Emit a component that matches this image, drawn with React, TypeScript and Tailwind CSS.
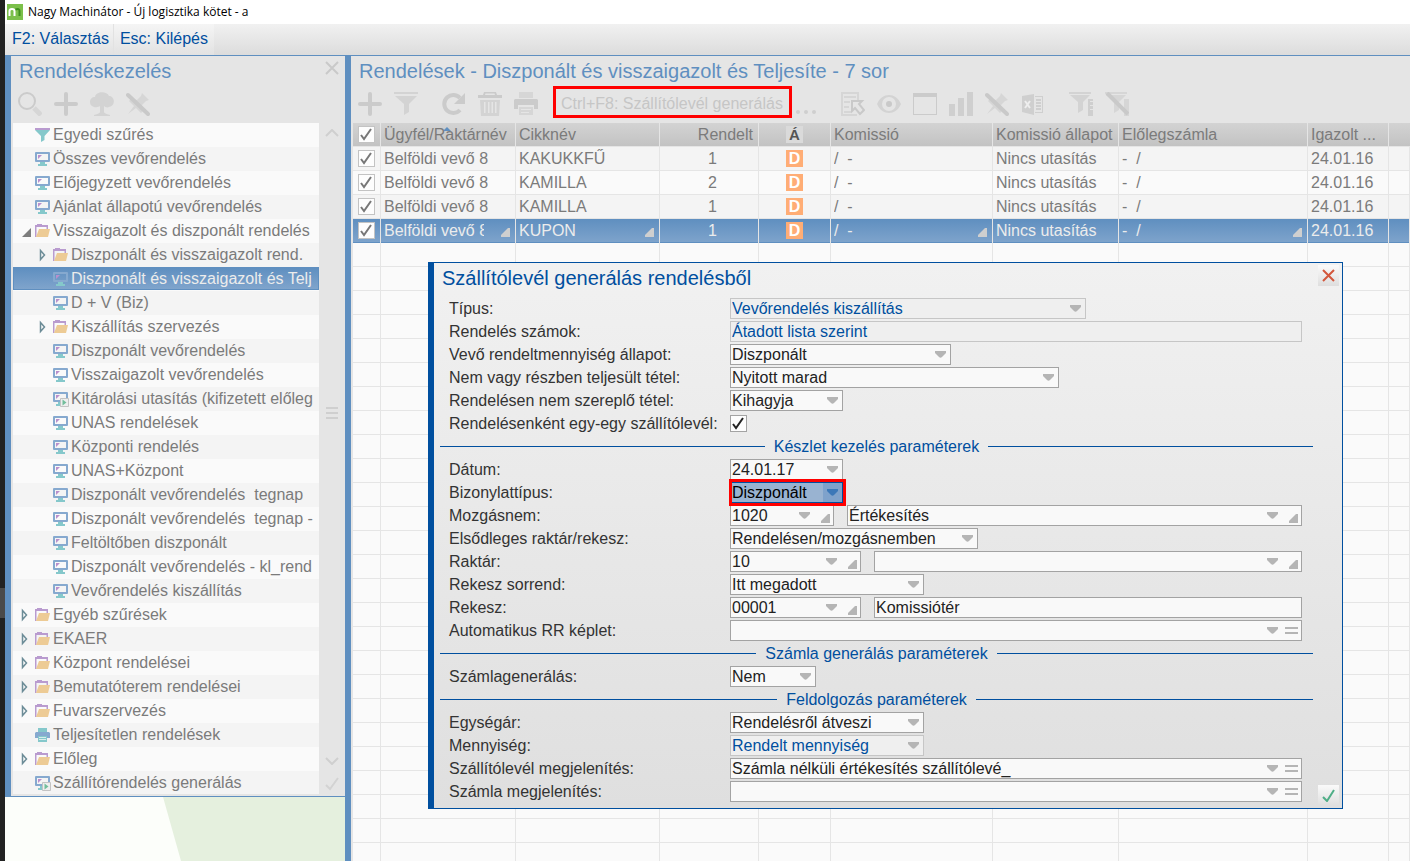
import type { ReactNode } from "react"
import clsx from "clsx"

type TreeIconName = "filter" | "screen" | "screenRun" | "folder" | "printer"

type TreeItem = {
    label: string
    icon: TreeIconName
    level?: number
    state?: "open" | "closed"
    selected?: boolean
}

const treeItems: TreeItem[] = [
    { label: "Egyedi szűrés", icon: "filter" },
    { label: "Összes vevőrendelés", icon: "screen" },
    { label: "Előjegyzett vevőrendelés", icon: "screen" },
    { label: "Ajánlat állapotú vevőrendelés", icon: "screen" },
    { label: "Visszaigazolt és diszponált rendelés", icon: "folder", state: "open" },
    { label: "Diszponált és visszaigazolt rend.", icon: "folder", level: 1, state: "closed" },
    { label: "Diszponált és visszaigazolt és Telj", icon: "screen", level: 1, selected: true },
    { label: "D + V (Biz)", icon: "screen", level: 1 },
    { label: "Kiszállítás szervezés", icon: "folder", level: 1, state: "closed" },
    { label: "Diszponált vevőrendelés", icon: "screen", level: 1 },
    { label: "Visszaigazolt vevőrendelés", icon: "screen", level: 1 },
    { label: "Kitárolási utasítás (kifizetett előleg", icon: "screenRun", level: 1 },
    { label: "UNAS rendelések", icon: "screen", level: 1 },
    { label: "Központi rendelés", icon: "screen", level: 1 },
    { label: "UNAS+Központ", icon: "screen", level: 1 },
    { label: "Diszponált vevőrendelés  tegnap", icon: "screen", level: 1 },
    { label: "Diszponált vevőrendelés  tegnap -", icon: "screen", level: 1 },
    { label: "Feltöltőben diszponált", icon: "screen", level: 1 },
    { label: "Diszponált vevőrendelés - kl_rend", icon: "screen", level: 1 },
    { label: "Vevőrendelés kiszállítás", icon: "screen", level: 1 },
    { label: "Egyéb szűrések", icon: "folder", state: "closed" },
    { label: "EKAER", icon: "folder", state: "closed" },
    { label: "Központ rendelései", icon: "folder", state: "closed" },
    { label: "Bemutatóterem rendelései", icon: "folder", state: "closed" },
    { label: "Fuvarszervezés", icon: "folder", state: "closed" },
    { label: "Teljesítetlen rendelések", icon: "printer" },
    { label: "Előleg", icon: "folder", state: "closed" },
    { label: "Szállítórendelés generálás", icon: "screenRun" },
]

const orders = [
    { item: "KAKUKKFŰ", qty: 1 },
    { item: "KAMILLA", qty: 2 },
    { item: "KAMILLA", qty: 1 },
    { item: "KUPON", qty: 1, selected: true },
]

const emptyRows = Array.from({ length: 40 }, (_, i) => i)

function TreeIcon({ name }: { name: TreeIconName }) {
    if (name === "filter") {
        return (
            <svg width="16" height="16" viewBox="0 0 16 16">
                <path d="M0 1h15v2H0z" fill="#b99bcf" />
                <path d="M0 3h15L9.500 9v4L6 15V9z" fill="#85c8cb" />
            </svg>
        )
    }
    if (name === "folder") {
        return (
            <svg width="16" height="16" viewBox="0 0 16 16">
                <path d="M0 14V2h2V1h5v1h6v4h-1.500V4H1.500v10z" fill="#b99bcf" />
                <path d="M4 6h11l-2 8H1z" fill="#edcb95" />
            </svg>
        )
    }
    if (name === "printer") {
        return (
            <svg width="16" height="16" viewBox="0 0 16 16">
                <path d="M3 1h9v4H3z" fill="#85c8cb" />
                <path d="M1 5h13l1 1v5H0V6z" fill="#86a9cf" />
                <path d="M3 9h9v6H3z" fill="#85c8cb" />
                <path d="M4 10h7v1H4zM4 12h7v1H4z" fill="#d9ecec" />
            </svg>
        )
    }
    return (
        <svg width="16" height="16" viewBox="0 0 16 16">
            <path d="M1 2h13v8H1z" fill="none" stroke="#86a9cf" strokeWidth="2" strokeLinejoin="round" />
            <path d="M3 4h4L3 8z" fill="#b98fcc" />
            <path d="M5 11h5v2h2v2H3v-2h2z" fill="#85c8cb" />
            {name === "screenRun" && (
                <>
                    <path d="M7.500 7.500h8v8h-8z" fill="#eeeeee" stroke="#c3c3c3" />
                    <path d="M9.500 8.500l4 3-4 3z" fill="#72bd9b" />
                </>
            )}
        </svg>
    )
}

function Expander({ state }: { state?: "open" | "closed" }) {
    if (!state) return <span className="w-3 shrink-0" />
    return (
        <svg width="12" height="16" viewBox="0 0 12 16" className="shrink-0">
            {state === "open" ? (
                <path d="M10 5v9H1z" fill="#7d7d7d" />
            ) : (
                <path d="M1.500 3.500v9l4-4.500z" fill="none" stroke="#6c8c97" strokeWidth="1.500" />
            )}
        </svg>
    )
}

function ToolButton({ label, children, className }: { label: string; children: ReactNode; className?: string }) {
    return (
        <button type="button" aria-label={label} className={clsx("mt-1 h-6 w-6 shrink-0", className)}>
            <svg width="24" height="24" viewBox="0 0 24 24" fill="#cfcfcf">
                {children}
            </svg>
        </button>
    )
}

function PlusIcon() {
    return <path d="M12 2v20M2 12h20" stroke="#cbcbcb" strokeWidth="4" strokeLinecap="round" />
}

function PinOffIcon() {
    return (
        <>
            <path d="M16 1l7 7-3 1-4 4 1 6-2 2-5-5-8 6 6-8-5-5 2-2 6 1 4-4z" fill="#d6d6d6" />
            <path d="M2 3l20 19" stroke="#c9c9c9" strokeWidth="4" strokeLinecap="round" />
        </>
    )
}

function PanelTitle({ children }: { children: ReactNode }) {
    return <h2 className="h-[30px] pl-2 text-[20px] leading-[30px] whitespace-nowrap text-[#5f8fc0]">{children}</h2>
}

function Sidebar() {
    return (
        <aside className="flex w-[340px] shrink-0 flex-col text-[#7b7b7b]">
            <div className="flex border-b border-l-[6px] border-[#5f8fc0] bg-[#e5e5e5]">
                <div className="w-[308px] shrink-0">
                    <PanelTitle>Rendeléskezelés</PanelTitle>
                    <div className="mb-[5px] flex h-8 items-center gap-3 pl-[7px]">
                        <ToolButton label="Keresés">
                            <circle cx="9" cy="9" r="8" fill="none" stroke="#cbcbcb" strokeWidth="2" />
                            <path d="M16 16l7 7" stroke="#d6d6d6" strokeWidth="5" />
                        </ToolButton>
                        <ToolButton label="Új">
                            <PlusIcon />
                        </ToolButton>
                        <ToolButton label="Fa">
                            <path d="M5 5c1-6 12-6 14-1 6 0 7 10 0 11-2 1-4 0-5-1v6c0 1 2 2 6 3v1H4v-1c4-1 6-2 6-3v-6c-2 2-10 2-10-4 0-3 2-5 5-5z" fill="#d3d3d3" />
                        </ToolButton>
                        <ToolButton label="Rögzítés">
                            <PinOffIcon />
                        </ToolButton>
                    </div>
                    <ul className="mb-[2px] ml-[2px] h-[671px] overflow-hidden text-[16px]">
                        {treeItems.map((item, i) => (
                            <li key={i} className={clsx("h-6", i % 2 ? "bg-[#f4f4f4]" : "bg-[#fafafa]")}>
                                <button
                                    type="button"
                                    className={clsx(
                                        "flex h-[23px] w-full items-center overflow-hidden border text-left",
                                        item.level ? "pl-[25px]" : "pl-[7px]",
                                        item.selected
                                            ? "border-[#5f8fc0] bg-linear-to-b from-[#5f8fc0] to-[#7fa4cc] text-[#ececec]"
                                            : "border-transparent",
                                    )}
                                >
                                    <Expander state={item.state} />
                                    <span className="ml-[2px] w-[18px] shrink-0">
                                        <TreeIcon name={item.icon} />
                                    </span>
                                    <span className="whitespace-pre">{item.label}</span>
                                </button>
                            </li>
                        ))}
                    </ul>
                </div>
                <div className="flex flex-1 flex-col items-center pt-[5px] pr-px">
                    <button type="button" aria-label="Bezárás">
                        <svg width="14" height="14" viewBox="0 0 14 14" stroke="#c9c9c9" strokeWidth="2">
                            <path d="M1 1l12 12M13 1L1 13" />
                        </svg>
                    </button>
                    <button type="button" aria-label="Fel" className="mt-[54px]">
                        <svg width="14" height="8" viewBox="0 0 14 8" fill="none" stroke="#cfcfcf" strokeWidth="2">
                            <path d="M1 7l6-6 6 6" />
                        </svg>
                    </button>
                    <span className="flex-[4]" />
                    <svg width="14" height="12" viewBox="0 0 14 12" stroke="#cfcfcf" strokeWidth="2">
                        <path d="M1 1h12M1 6h12M1 11h12" />
                    </svg>
                    <span className="flex-[5]" />
                    <button type="button" aria-label="Le" className="mb-3">
                        <svg width="14" height="8" viewBox="0 0 14 8" fill="none" stroke="#cfcfcf" strokeWidth="2">
                            <path d="M1 1l6 6 6-6" />
                        </svg>
                    </button>
                    <button type="button" aria-label="Rendben" className="mb-[5px]">
                        <svg width="14" height="14" viewBox="0 0 14 14" fill="none" stroke="#d3d3d3" strokeWidth="2">
                            <path d="M1 8l4 4L13 1" />
                        </svg>
                    </button>
                </div>
            </div>
            <div className="flex-1 overflow-hidden bg-[#fcfefa]">
                <svg width="340" height="64" viewBox="0 0 340 64" preserveAspectRatio="none" className="h-full w-full">
                    <path d="M158 0h182v64H176z" fill="#e5f0de" />
                </svg>
            </div>
        </aside>
    )
}

function MainToolbar() {
    return (
        <div className="mb-[5px] flex h-8 items-center gap-3 pl-[7px]">
            <ToolButton label="Új">
                <PlusIcon />
            </ToolButton>
            <ToolButton label="Szűrés" className="mr-3">
                <path d="M0 0h24v2H0zM1 4h22l-8 8v8l-5 3V12z" fill="#d3d3d3" />
            </ToolButton>
            <ToolButton label="Frissítés">
                <path d="M18 6a9 9 0 1 0 0 12" fill="none" stroke="#cbcbcb" strokeWidth="4" />
                <path d="M23 1v11H12z" fill="#cbcbcb" />
            </ToolButton>
            <ToolButton label="Törlés">
                <path d="M6 0h12l1 3h5v3H0V3h5zM7.500 1.500L7 3h10l-.500-1.500z" fillRule="evenodd" fill="#cbcbcb" />
                <path d="M2 8h20l-1 16H3zM6 10v11h1.500V10zM10 10v11h1.500V10zM13.500 10v11H15V10zM17 10v11h1.500V10z" fillRule="evenodd" fill="#d3d3d3" />
            </ToolButton>
            <ToolButton label="Nyomtatás">
                <path d="M5 0h14v6H5z" fill="#d6d6d6" />
                <path d="M1 7h22l1 1v9h-4v-4H4v4H0V8z" fill="#cbcbcb" />
                <path d="M5 15h14v8H5zM7 17v1h10v-1zM7 20v1h8v-1z" fill="#d6d6d6" fillRule="evenodd" />
            </ToolButton>
            <button
                type="button"
                className="ml-[3px] h-8 w-[239px] shrink-0 border-[3px] border-[#ff0000] pl-[5px] text-left text-[16px] leading-[30px] whitespace-nowrap text-[#c6c6c6]"
            >
                Ctrl+F8: Szállítólevél generálás
            </button>
            <ToolButton label="Továbbiak" className="-ml-2 mr-[9px]">
                <circle cx="2" cy="20" r="2" />
                <circle cx="10" cy="20" r="2" />
                <circle cx="18" cy="20" r="2" />
            </ToolButton>
            <ToolButton label="Megnyitás">
                <path d="M0 0h18v8h-2V2H2v20h14v2H0z" fill="#d6d6d6" />
                <path d="M3 4h12v2H3zM3 9h6v2H3zM3 14h5v2H3zM3 19h7v2H3z" fill="#d6d6d6" />
                <path d="M11 9h10l-3 3 5 6-4 4-5-6-3 3z" fill="#e5e5e5" stroke="#c9c9c9" strokeWidth="2" />
            </ToolButton>
            <ToolButton label="Nézet">
                <path d="M0 12C5 0 19 0 24 12 19 24 5 24 0 12zM12 5a7 7 0 1 0 0 14 7 7 0 0 0 0-14z" fillRule="evenodd" fill="#d3d3d3" />
                <circle cx="12" cy="12" r="3" fill="#c9c9c9" />
            </ToolButton>
            <ToolButton label="Ablak">
                <path d="M0 1h24v22H0zM1 5v17h22V5z" fillRule="evenodd" fill="#cbcbcb" />
            </ToolButton>
            <ToolButton label="Diagram">
                <path d="M0 12h6v12H0zM9 6h6v18H9zM18 0h6v24h-6z" />
            </ToolButton>
            <ToolButton label="Rögzítés">
                <PinOffIcon />
            </ToolButton>
            <ToolButton label="Excel" className="mr-3">
                <path d="M14 4h8v17h-8v-1h7V5h-7zM15 7h5v2h-5zM15 10h5v2h-5zM15 13h5v2h-5zM15 16h5v2h-5z" />
                <path d="M1 4l12-2v21L1 20z" />
                <path d="M4 9l5 7M9 9l-5 7" stroke="#eeeeee" strokeWidth="2" />
            </ToolButton>
            <ToolButton label="Szűrő mentése">
                <path d="M0 0h22v2H0zM1 3h20l-7 7v8l-5 3V10z" fill="#d3d3d3" />
                <path d="M19 7h5v17h-5zM21 9v1h3V9zM21 13v1h3v-1zM21 17v1h3v-1z" fillRule="evenodd" />
            </ToolButton>
            <ToolButton label="Szűrő törlése">
                <path d="M0 0h22v2H0zM1 3h20l-7 7v8l-5 3V10z" fill="#d6d6d6" />
                <path d="M19 7h5v17h-5z" fill="#d6d6d6" />
                <path d="M2 1l21 21" stroke="#c9c9c9" strokeWidth="4" />
            </ToolButton>
        </div>
    )
}

function CheckBox({ label, id, muted }: { label?: string; id?: string; muted?: boolean }) {
    return (
        <span className="relative block h-[17px] w-[17px]">
            <input
                id={id}
                type="checkbox"
                defaultChecked
                aria-label={label}
                className={clsx(
                    "block h-[17px] w-[17px] appearance-none border bg-[#fdfdfd]",
                    muted ? "border-[#c3c3c3]" : "border-[#a3a3a3]",
                )}
            />
            <svg
                width="17"
                height="17"
                viewBox="0 0 17 17"
                fill="none"
                stroke={muted ? "#777777" : "#222222"}
                strokeWidth="2"
                className="pointer-events-none absolute top-0 left-0"
            >
                <path d="M3 9l3 4L13 3" />
            </svg>
        </span>
    )
}

function Corner({ className }: { className?: string }) {
    return (
        <svg width="9" height="9" viewBox="0 0 9 9" className={className}>
            <path d="M7 0h2v9H0V7z" fill="currentColor" />
        </svg>
    )
}

type CellProps = { children?: ReactNode; selected?: boolean; corner?: boolean; centered?: boolean }

function Cell({ children, selected, corner, centered }: CellProps) {
    return (
        <td
            className={clsx(
                "h-6 overflow-hidden border-r border-[#e5e5e5] p-0",
                selected ? "bg-linear-to-b from-[#5f8fc0] to-[#7fa4cc]" : "border-b",
            )}
        >
            <div
                className={clsx(
                    "flex h-[23px] items-center overflow-hidden whitespace-pre",
                    !centered && "pl-[3px]",
                    selected && "border-b border-[#5f8fc0]",
                )}
            >
                <span className="flex-1 overflow-hidden">{children}</span>
                {selected && corner && <Corner className="mt-1 mr-[5px] ml-[17px] shrink-0 text-[#cfcfcf]" />}
            </div>
        </td>
    )
}

function OrdersTable() {
    const th = "h-6 overflow-hidden border-r border-b border-[#e5e5e5] p-0 text-left font-normal whitespace-nowrap"
    return (
        <table className="w-full table-fixed border-separate border-spacing-0 text-[16px] leading-[22px] text-[#7b7b7b]">
            <colgroup>
                <col className="w-[28px]" />
                <col className="w-[135px]" />
                <col className="w-[144px]" />
                <col className="w-[99px]" />
                <col className="w-[72px]" />
                <col className="w-[162px]" />
                <col className="w-[126px]" />
                <col className="w-[189px]" />
                <col className="w-[81px]" />
                <col />
            </colgroup>
            <thead>
                <tr className="bg-linear-to-b from-[#d3d3d3] to-[#c2c2c2]">
                    <th className={clsx(th, "pl-[5px]")}>
                        <CheckBox label="Összes kijelölése" muted />
                    </th>
                    <th className={clsx(th, "relative pl-[3px]")}>
                        <svg width="8" height="4" viewBox="0 0 8 4" className="absolute top-1 left-[62px]">
                            <path d="M4 0l4 4H0z" fill="#5f8fc0" />
                        </svg>
                        <span className="relative">Ügyfél/Raktárnév</span>
                    </th>
                    <th className={clsx(th, "pl-[3px]")}>Cikknév</th>
                    <th className={clsx(th, "pr-[5px] text-right")}>Rendelt</th>
                    <th className={th}>
                        <span className="mx-auto block h-[17px] w-[17px] bg-[#dadada] text-center text-[15px] leading-[18px] font-bold text-[#555555]">
                            Á
                        </span>
                    </th>
                    <th className={clsx(th, "pl-[3px]")}>Komissió</th>
                    <th className={clsx(th, "pl-[3px]")}>Komissió állapot</th>
                    <th className={clsx(th, "pl-[3px]")}>Előlegszámla</th>
                    <th className={clsx(th, "pl-[3px]")}>Igazolt ...</th>
                    <th className={clsx(th, "border-r-0")} />
                </tr>
            </thead>
            <tbody>
                {orders.map((order, i) => (
                    <tr
                        key={i}
                        className={clsx(order.selected ? "text-[#ececec]" : i % 2 ? "bg-[#fafafa]" : "bg-[#f4f4f4]")}
                    >
                        <Cell selected={order.selected}>
                            <span className="block pl-[2px]">
                                <CheckBox label={order.item} muted />
                            </span>
                        </Cell>
                        <Cell selected={order.selected} corner>
                            Belföldi vevő 8
                        </Cell>
                        <Cell selected={order.selected} corner>
                            {order.item}
                        </Cell>
                        <Cell selected={order.selected}>
                            <span className="block pr-[41px] text-right">{order.qty}</span>
                        </Cell>
                        <Cell selected={order.selected} centered>
                            <span className="mx-auto block h-[17px] w-[17px] bg-[#ffad75] text-center text-[16px] leading-[18px] font-bold text-white">
                                D
                            </span>
                        </Cell>
                        <Cell selected={order.selected} corner>
                            {"/  -"}
                        </Cell>
                        <Cell selected={order.selected}>Nincs utasítás</Cell>
                        <Cell selected={order.selected} corner>
                            {"-  /"}
                        </Cell>
                        <Cell selected={order.selected}>24.01.16</Cell>
                        <Cell selected={order.selected} />
                    </tr>
                ))}
                {emptyRows.map((row) => (
                    <tr key={row} className="bg-[#fafafa]">
                        {Array.from({ length: 10 }, (_, col) => (
                            <Cell key={col} />
                        ))}
                    </tr>
                ))}
            </tbody>
        </table>
    )
}

function Arrow({ className }: { className?: string }) {
    return (
        <svg width="11" height="7" viewBox="0 0 11 7" className={clsx("shrink-0", className)}>
            <path d="M0 0h11v2L7 6q-1.500 1.500-3 0L0 2z" fill="currentColor" />
        </svg>
    )
}

type FieldProps = {
    id: string
    value?: string
    width: string
    extra?: "corner" | "menu"
    plain?: boolean
    locked?: boolean
    label?: string
}

function TextField({ id, value = "", width, extra, plain, locked, label }: FieldProps) {
    return (
        <span
            className={clsx(
                "flex h-[21px] items-center border",
                width,
                locked ? "border-[#c6c6c6] bg-[#efefef] text-[#004f9f]" : "border-[#a3a3a3] bg-[#f9f9f9] text-[#222222]",
            )}
        >
            <input
                id={id}
                aria-label={label}
                defaultValue={value}
                readOnly={locked}
                className="h-[19px] min-w-0 flex-1 bg-transparent px-[1px] outline-none"
            />
            {!plain && <Arrow className="mr-[7px] text-[#b5b5b5]" />}
            {extra === "corner" && <Corner className="mt-[5px] mr-[3px] ml-1 shrink-0 text-[#b5b5b5]" />}
            {extra === "menu" && (
                <svg width="13" height="7" viewBox="0 0 13 7" className="mr-[3px] shrink-0 text-[#b5b5b5]">
                    <path d="M0 0h13v2H0zM0 5h13v2H0z" fill="currentColor" />
                </svg>
            )}
        </span>
    )
}

function SelectField({ id, value, width, locked, active }: FieldProps & { active?: boolean }) {
    return (
        <span className={clsx("relative block h-[21px]", width)}>
            <select
                id={id}
                className={clsx(
                    "block h-[21px] w-full appearance-none border px-[1px] leading-[19px] outline-none",
                    active && "border-[#004f9f] bg-[#99b3d1] text-black",
                    locked && "border-[#c6c6c6] bg-[#efefef] text-[#004f9f]",
                    !active && !locked && "border-[#a3a3a3] bg-[#f9f9f9] text-[#222222]",
                )}
            >
                <option>{value}</option>
            </select>
            <span
                className={clsx(
                    "pointer-events-none absolute top-px right-px flex h-[19px] w-[19px] items-center justify-center",
                    active ? "bg-[#7fa2cb] text-[#3c78b8]" : "text-[#b5b5b5]",
                )}
            >
                <Arrow />
            </span>
            {active && <span className="pointer-events-none absolute -inset-y-[3px] -right-[3px] -left-px border-[3px] border-[#ff0000]" />}
        </span>
    )
}

function Row({ label, id, children }: { label: string; id: string; children: ReactNode }) {
    return (
        <div className="flex h-[21px] pr-[11px] pl-[9px]">
            <label htmlFor={id} className="w-[281px] shrink-0 leading-[21px] whitespace-nowrap">
                {label}
            </label>
            <div className="flex min-w-0 flex-1 items-center gap-[13px]">{children}</div>
        </div>
    )
}

function Divider({ children }: { children: ReactNode }) {
    return (
        <div className="flex h-[21px] items-center gap-[9px] leading-[21px] text-[#004f9f]">
            <span className="h-px flex-1 bg-[#004f9f]" />
            <h3>{children}</h3>
            <span className="h-px flex-1 bg-[#004f9f]" />
        </div>
    )
}

function DeliveryDialog() {
    const sideButton = "flex h-[21px] w-[21px] items-center justify-center bg-linear-to-b from-[#fafafa] to-[#dedede]"
    return (
        <div
            role="dialog"
            aria-labelledby="dialog-title"
            className="absolute top-[206px] right-[67px] left-[77px] flex border border-l-[6px] border-[#004f9f] bg-linear-to-b from-[#f1f1f1] to-[#dfdfdf] text-[16px] text-[#333333]"
        >
            <form className="min-w-0 flex-1 pb-[6px] pl-[6px]">
                <h2 id="dialog-title" className="h-[35px] pl-[2px] text-[20px] leading-[31px] text-[#004f9f]">
                    Szállítólevél generálás rendelésből
                </h2>
                <div className="flex flex-col gap-[2px]">
                    <Row label="Típus:" id="tipus">
                        <SelectField id="tipus" value="Vevőrendelés kiszállítás" width="w-[356px]" locked />
                    </Row>
                    <Row label="Rendelés számok:" id="szamok">
                        <TextField id="szamok" value="Átadott lista szerint" width="w-full" plain locked />
                    </Row>
                    <Row label="Vevő rendeltmennyiség állapot:" id="allapot">
                        <SelectField id="allapot" value="Diszponált" width="w-[221px]" />
                    </Row>
                    <Row label="Nem vagy részben teljesült tétel:" id="reszben">
                        <SelectField id="reszben" value="Nyitott marad" width="w-[329px]" />
                    </Row>
                    <Row label="Rendelésen nem szereplő tétel:" id="nemszereplo">
                        <SelectField id="nemszereplo" value="Kihagyja" width="w-[113px]" />
                    </Row>
                    <Row label="Rendelésenként egy-egy szállítólevél:" id="egyegy">
                        <CheckBox id="egyegy" />
                    </Row>
                    <Divider>Készlet kezelés paraméterek</Divider>
                    <Row label="Dátum:" id="datum">
                        <SelectField id="datum" value="24.01.17" width="w-[113px]" />
                    </Row>
                    <Row label="Bizonylattípus:" id="biztipus">
                        <SelectField id="biztipus" value="Diszponált" width="w-[113px]" active />
                    </Row>
                    <Row label="Mozgásnem:" id="mozgasnem">
                        <TextField id="mozgasnem" value="1020" width="w-[104px]" extra="corner" />
                        <TextField id="mozgasnev" label="Mozgásnem neve" value="Értékesítés" width="flex-1" extra="corner" />
                    </Row>
                    <Row label="Elsődleges raktár/rekesz:" id="elsodleges">
                        <SelectField id="elsodleges" value="Rendelésen/mozgásnemben" width="w-[248px]" />
                    </Row>
                    <Row label="Raktár:" id="raktar">
                        <TextField id="raktar" value="10" width="w-[131px]" extra="corner" />
                        <TextField id="raktarnev" label="Raktár neve" width="flex-1" extra="corner" />
                    </Row>
                    <Row label="Rekesz sorrend:" id="sorrend">
                        <SelectField id="sorrend" value="Itt megadott" width="w-[194px]" />
                    </Row>
                    <Row label="Rekesz:" id="rekesz">
                        <TextField id="rekesz" value="00001" width="w-[131px]" extra="corner" />
                        <TextField id="rekesznev" label="Rekesz neve" value="Komissiótér" width="flex-1" plain />
                    </Row>
                    <Row label="Automatikus RR képlet:" id="keplet">
                        <TextField id="keplet" width="w-full" extra="menu" />
                    </Row>
                    <Divider>Számla generálás paraméterek</Divider>
                    <Row label="Számlagenerálás:" id="szamla">
                        <SelectField id="szamla" value="Nem" width="w-[86px]" />
                    </Row>
                    <Divider>Feldolgozás paraméterek</Divider>
                    <Row label="Egységár:" id="egysegar">
                        <SelectField id="egysegar" value="Rendelésről átveszi" width="w-[194px]" />
                    </Row>
                    <Row label="Mennyiség:" id="mennyiseg">
                        <SelectField id="mennyiseg" value="Rendelt mennyiség" width="w-[194px]" locked />
                    </Row>
                    <Row label="Szállítólevél megjelenítés:" id="szlmegj">
                        <TextField id="szlmegj" value="Számla nélküli értékesítés szállítólevé_" width="w-full" extra="menu" />
                    </Row>
                    <Row label="Számla megjelenítés:" id="szmegj">
                        <TextField id="szmegj" width="w-full" extra="menu" />
                    </Row>
                </div>
            </form>
            <div className="flex w-[29px] shrink-0 flex-col items-end justify-between p-[2px] pr-[3px]">
                <button type="button" aria-label="Bezárás" className={sideButton}>
                    <svg width="13" height="13" viewBox="0 0 13 13" stroke="#d3573c" strokeWidth="2">
                        <path d="M1 1l11 11M12 1L1 12" />
                    </svg>
                </button>
                <button type="button" aria-label="Rendben" className={sideButton}>
                    <svg width="13" height="13" viewBox="0 0 13 13" fill="none" stroke="#4fae87" strokeWidth="2">
                        <path d="M1 8l4 4 7-11" />
                    </svg>
                </button>
            </div>
        </div>
    )
}

function App() {
    return (
        <div className="flex h-screen overflow-hidden bg-[#222222] font-['Liberation_Sans',Arial,sans-serif]">
            <div className="flex w-[5px] shrink-0 flex-col">
                <span className="mt-[588px] h-[30px] bg-[#4a4a4a]" />
            </div>
            <div className="flex min-w-0 flex-1 flex-col">
                <header className="flex h-6 shrink-0 items-center bg-white pl-[2px]">
                    <svg width="16" height="16" viewBox="0 0 16 16">
                        <path d="M0 0h16v16H0z" fill="#7cc04b" />
                        <path d="M2.500 12V7q0-2 2.500-2t2.500 2v5" fill="none" stroke="#ffffff" strokeWidth="2" />
                        <path d="M8.500 5.500Q12.500 4 12.500 7v5" fill="none" stroke="#3f8f1f" strokeWidth="2" />
                    </svg>
                    <h1 className="ml-[5px] font-['Open_Sans',sans-serif] text-[12px] text-black">
                        Nagy Machinátor - Új logisztika kötet - a
                    </h1>
                </header>
                <nav className="flex h-8 shrink-0 border-b border-[#5f8fc0] bg-linear-to-b from-[#f1f1f1] to-[#dcdcdc] text-[16px] text-[#004f9f]">
                    <button type="button" className="border-r border-[#e2e2e2] bg-linear-to-b from-[#f5f5f5] to-[#e2e2e2] pr-1 pb-[2px] pl-[7px]">
                        F2: Választás
                    </button>
                    <button type="button" className="bg-linear-to-b from-[#f5f5f5] to-[#e2e2e2] px-[6px] pb-[2px]">
                        Esc: Kilépés
                    </button>
                </nav>
                <div className="flex min-h-0 flex-1">
                    <Sidebar />
                    <main className="relative flex min-w-0 flex-1 flex-col border-l-[6px] border-[#5f8fc0] bg-[#e5e5e5]">
                        <PanelTitle>Rendelések - Diszponált és visszaigazolt és Teljesíte - 7 sor</PanelTitle>
                        <MainToolbar />
                        <div className="ml-[2px] min-h-0 flex-1 overflow-hidden">
                            <OrdersTable />
                        </div>
                        <DeliveryDialog />
                    </main>
                </div>
            </div>
        </div>
    )
}

export default App
